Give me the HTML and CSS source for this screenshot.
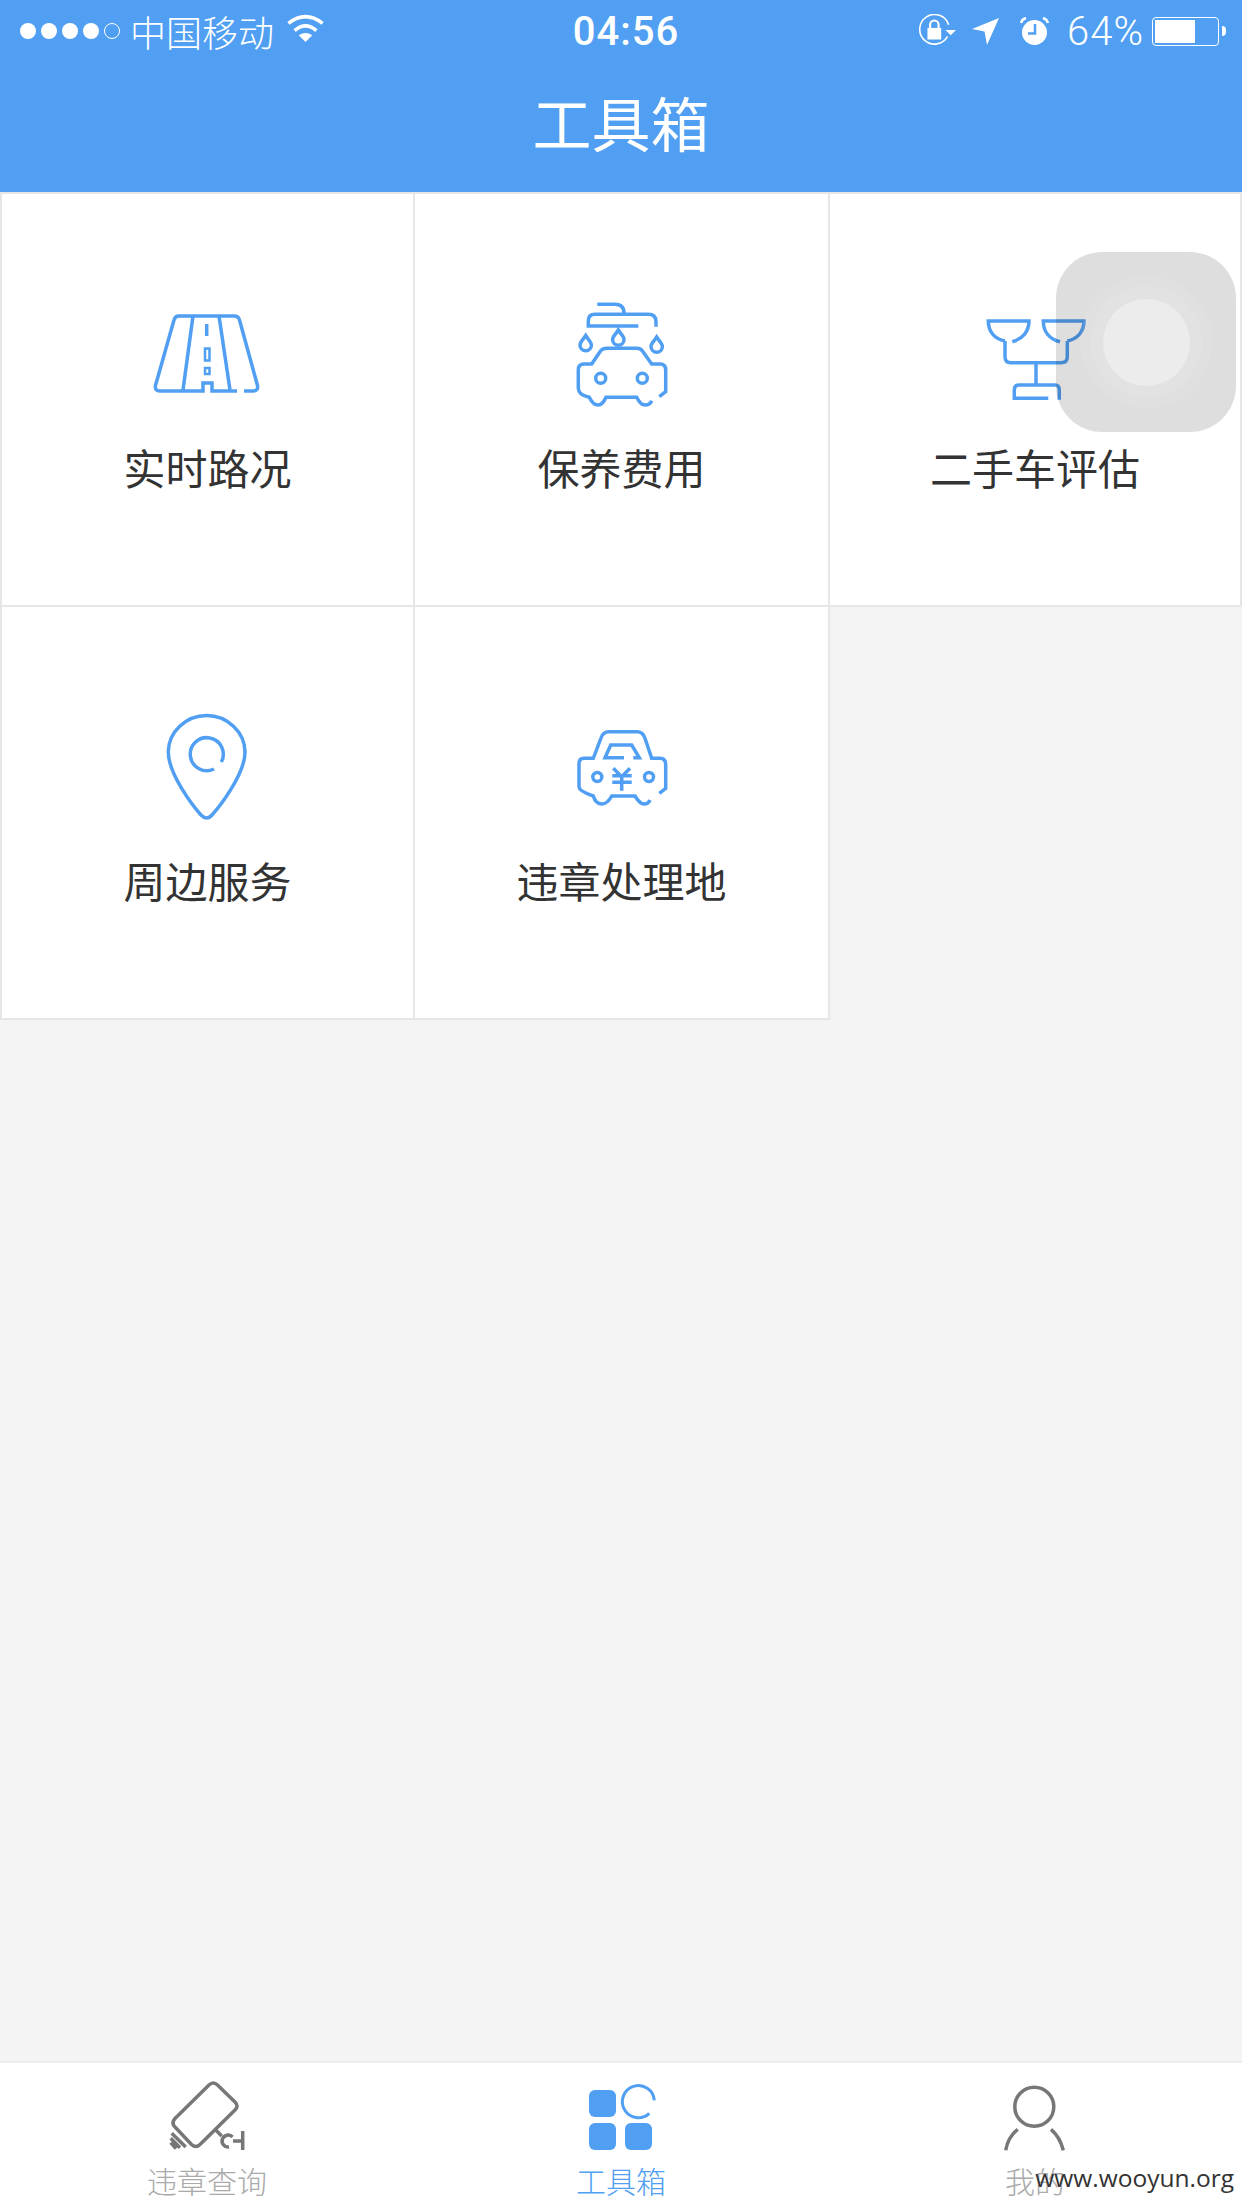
FILE: index.html
```html
<html>

<head>
  <link rel="stylesheet" href="styles.css">
</head>

<body>
  <div class="page">
    <div class="header">
      <div class="status">
        <div class="status-left">
          <div class="dots">
            <div class="dot"></div>
            <div class="dot"></div>
            <div class="dot"></div>
            <div class="dot"></div>
            <div class="dot dot-empty"></div>
          </div>
          <div class="carrier">中国移动</div>
          <svg class="wifi" width="39" height="29" viewBox="0 0 37 28">
            <path d="M2 10Q18.5-3 35 10M8 17Q18.5 8 29 17" fill="none" stroke="#fff" stroke-width="3.5" />
            <path d="M12 21.5Q18.5 17 25 21.5L18.5 28Z" fill="#fff" />
          </svg>
        </div>
        <div class="time">04:56</div>
        <div class="status-right">
          <svg class="lock" width="37" height="32" viewBox="0 0 35 30">
            <path d="M27 21A14 14 0 1 1 28 10" fill="none" stroke="#fff" stroke-width="1.5" />
            <rect x="8" y="13" width="13" height="11" fill="#fff" />
            <path d="M10.5 13V10A4 4 0 0 1 18.5 10V13" fill="none" stroke="#fff" stroke-width="2" />
            <path d="M25 15H35L30 20Z" fill="#fff" />
          </svg>
          <svg class="gap-arrow" width="27" height="27" viewBox="0 0 27 27">
            <path d="M0 11L27 0L15 27L12.500 13.500Z" fill="#fff" />
          </svg>
          <svg class="gap-alarm" width="29" height="28" viewBox="0 0 29 28">
            <circle cx="14.500" cy="15.500" r="12.500" fill="#fff" />
            <path d="M15 7V16.500H8" fill="none" stroke="#519ff2" stroke-width="2.500" />
            <path d="M1 6Q2 2 6 1M28 6Q27 2 23 1" fill="none" stroke="#fff" stroke-width="2.500" />
          </svg>
          <div class="percent">64%</div>
          <div class="battery">
            <div class="battery-fill"></div>
          </div>
          <div class="battery-nub"></div>
        </div>
      </div>
      <div class="title">工具箱</div>
    </div>

    <div class="main">
      <div class="grid">
        <div class="cell">
          <svg class="icon" width="120" height="120" viewBox="0 0 120 120">
            <path d="M96 91H105Q110.500 91 109.500 85.500L91.500 20Q90.500 16 86 16H31Q27 16 26 20L7.500 85.500Q6.500 91 12 91H55V83H64V91H89" />
            <path d="M45 16L35 90M71 16L82 90M58.700 24V36" />
            <rect x="57" y="48.500" width="4.500" height="12" stroke-width="2.500" />
            <rect x="57" y="68" width="4.500" height="6" stroke-width="2.500" />
          </svg>
          <div class="label">实时路况</div>
        </div>

        <div class="cell">
          <svg class="icon" width="120" height="120" viewBox="0 0 120 120">
            <path d="M35.300 4.300H53Q62 4.300 62 13.300" />
            <path d="M76.300 26H26.300V21Q26.300 14.300 33 14.300H86.300Q94 14.300 94 21.700V26.700" />
            <path d="M23.700 35.500C21 40 18 42 18 45A5.700 5.700 0 0 0 29.400 45C29.400 42 26.500 40 23.700 35.500Z" />
            <path d="M56.300 30C53.600 34.500 50.600 36.500 50.600 39.500A5.700 5.700 0 0 0 62 39.500C62 36.500 59 34.500 56.300 30Z" />
            <path d="M94.700 37C92 41.500 89 43.500 89 46.500A5.700 5.700 0 0 0 100.400 46.500C100.400 43.500 97.500 41.500 94.700 37Z" />
            <path d="M97.300 96.700L103.700 91.700V70Q103.700 64 98 64H89.700L81 51.700Q79 48.300 75 48.300H45Q40 48.300 38 51.700L29.700 64H22Q16.300 64 16.300 70V88Q16.300 95 27.300 97.300C30 103 33 105 36 105C40 105 42 102 44 97.300H74.700C77 102 80 105 83 105C86 105 88.500 103.500 89.700 100.700" />
            <circle cx="38.700" cy="78.300" r="5" />
            <circle cx="80.300" cy="78.300" r="5" />
          </svg>
          <div class="label">保养费用</div>
        </div>

        <div class="cell">
          <svg class="icon" width="120" height="120" viewBox="-1 -1 120 120">
            <path d="M29 40C18 38 12.300 30 12.300 20H53C53 30 47 38 36.300 40.700" />
            <path d="M84 40.700C73 38 67.300 30 67.300 20H108C108 30 102 38 91.300 40" />
            <path d="M29 40V56Q29 61.700 35 61.700H85Q91.300 61.700 91.300 56V40M60 61.700V84" />
            <path d="M72.300 97.300H38.300V89Q38.300 84 43 84H79Q83.300 84 83.300 89V98.700" />
          </svg>
          <div class="label">二手车评估</div>
        </div>

        <div class="cell">
          <svg class="icon" width="120" height="120" viewBox="0 -1 120 120">
            <path d="M58.700 1.500C38 1.500 20.300 18 20.300 38C20.300 60 45 92 53 101Q58.700 107 64 101C72 92 97 60 97 38C97 18 79 1.500 58.700 1.500Z" />
            <path d="M66 55A16.500 16.500 0 1 1 73.300 48" />
          </svg>
          <div class="label">周边服务</div>
        </div>

        <div class="cell">
          <svg class="icon" width="120" height="120" viewBox="0 -1 120 120">
            <path d="M97.300 79.300L103.700 74.300V51Q103.700 44.300 98 44.300H89.700L83 24.300Q81 17.700 75 17.700H47Q41 17.700 39 24L31.300 44.300H22Q17 44.300 17 50V72.700Q17 77 31.300 82C33 88 37 90 40 90C44 90 47 87 49.700 82H73C76 87 79 90 82 90C85 90 87 88.500 88 86" />
            <path d="M62 43.700H43L48.700 31H69.700L77.300 43.700H71.300" />
            <circle cx="35.300" cy="63" r="4.500" />
            <circle cx="87" cy="63" r="4.500" />
            <path d="M51.300 54.300L59.700 62.700L68 54.300M50.300 61.700H69.700M50.300 68.300H69.700M59.700 61.700V76.700" />
          </svg>
          <div class="label">违章处理地</div>
        </div>
      </div>
    </div>

    <div class="tabbar">
      <div class="tab">
        <svg width="100" height="80" viewBox="0 0 100 80">
          <g class="tab-line">
            <path d="M52 8Q56.300 4 60.500 8L78 25Q82 29 78 33L43 67.500Q39 71.500 34.500 67.500L18 50Q14 46 18 41.500Z" />
            <path d="M14.700 56.300L28.700 70M13.700 61.300L23 70.700M13.700 65.700L19 71.700" />
            <path d="M59 53.300L64.700 59M75.500 60A6 6 0 1 0 72 70M76 64H85.700M85.700 54V73" />
          </g>
        </svg>
        <div class="tab-label">违章查询</div>
      </div>
      <div class="tab tab-active">
        <svg width="100" height="80" viewBox="0 0 100 80">
          <rect x="18" y="13" width="27" height="27" rx="6" fill="#519ff2" />
          <rect x="18" y="46" width="27" height="27" rx="6" fill="#519ff2" />
          <rect x="54" y="46" width="27" height="27" rx="6" fill="#519ff2" />
          <path d="M83.300 23.300A16 16 0 1 0 78.300 36.300" fill="none" stroke="#519ff2" stroke-width="3" />
        </svg>
        <div class="tab-label">工具箱</div>
      </div>
      <div class="tab">
        <svg width="100" height="80" viewBox="0 0 100 80">
          <g class="tab-line">
            <circle cx="49.300" cy="29.700" r="19.500" />
            <path d="M32.700 52.300Q23 60 20.700 73.300M66 52.300Q75 60 78.300 73.300" />
          </g>
        </svg>
        <div class="tab-label">我的</div>
      </div>
    </div>
  </div>

  <div class="assist">
    <div class="assist-outer">
      <div class="assist-middle">
        <div class="assist-inner"></div>
      </div>
    </div>
  </div>

  <div class="watermark">www.wooyun.org</div>
</body>

</html>
```

FILE: styles.css
```css
body {
  margin: 0;
  font-family: "Noto Sans CJK SC", "Noto Sans", sans-serif;
  background: #f4f4f4;
}

.page {
  display: flex;
  flex-direction: column;
  height: 2208px;
}

.header {
  background: #519ff2;
  color: #fff;
  border-bottom: 2px solid #e6e6e6;
}

.status {
  display: flex;
  justify-content: space-between;
  align-items: center;
  height: 62px;
  padding: 0 16px 0 20px;
}

.status-left {
  display: flex;
  align-items: center;
}

.dots {
  display: flex;
  gap: 5px;
}

.dot {
  width: 16px;
  height: 16px;
  border-radius: 50%;
  background: #fff;
  box-sizing: border-box;
}

.dot-empty {
  background: none;
  border: 1px solid #fff;
}

.carrier {
  margin-left: 10px;
  font-size: 36px;
  line-height: 60px;
  font-weight: 300;
}

.wifi {
  margin-left: 12px;
  margin-top: -7px;
}

.time {
  margin-left: 8px;
  font-family: Roboto, sans-serif;
  font-size: 40px;
  font-weight: 500;
  letter-spacing: 1px;
}

.status-right {
  display: flex;
  align-items: center;
}

.lock {
  margin-top: -3px;
}

.gap-arrow {
  margin-left: 16px;
}

.gap-alarm {
  margin-left: 21px;
}

.percent {
  margin-left: 18px;
  font-family: Roboto, sans-serif;
  font-size: 40px;
  font-weight: 300;
  letter-spacing: 1px;
}

.battery {
  box-sizing: border-box;
  width: 67px;
  height: 29px;
  margin-left: 8px;
  padding: 2px;
  border: 1px solid #fff;
  border-radius: 4px;
}

.battery-fill {
  width: 40px;
  height: 100%;
  background: #fff;
}

.battery-nub {
  width: 4px;
  height: 10px;
  margin-left: 3px;
  background: #fff;
  border-radius: 0 5px 5px 0;
}

.title {
  height: 130px;
  font-size: 59px;
  line-height: 120px;
  text-align: center;
  font-weight: 400;
}

.main {
  flex: 1;
}

.grid {
  display: grid;
  grid-template-columns: 415px 415px 412px;
  grid-auto-rows: 413px;
}

.cell {
  display: flex;
  flex-direction: column;
  align-items: center;
  box-sizing: border-box;
  padding-top: 106px;
  background: #fff;
  border-right: 2px solid #e6e6e6;
  border-bottom: 2px solid #e6e6e6;
}

.cell:nth-child(3n+1) {
  border-left: 2px solid #e6e6e6;
}

.icon {
  fill: none;
  stroke: #519ff2;
  stroke-width: 3.5;
}

.label {
  margin-top: 17px;
  font-size: 42px;
  line-height: 60px;
  font-weight: 400;
  color: #333;
}

.tabbar {
  display: flex;
  justify-content: space-between;
  height: 145px;
  background: #fff;
  border-top: 2px solid #eee;
}

.tab {
  display: flex;
  flex-direction: column;
  align-items: center;
  width: 414px;
  padding-top: 14px;
  color: #aaa;
}

.tab-active {
  color: #519ff2;
}

.tab-line {
  fill: none;
  stroke: #777;
  stroke-width: 3.5;
}

.tab-label {
  margin-top: 3px;
  font-size: 30px;
  line-height: 40px;
  font-weight: 300;
}

.assist {
  position: absolute;
  left: 1056px;
  top: 252px;
  display: flex;
  justify-content: center;
  align-items: center;
  width: 180px;
  height: 180px;
  border-radius: 46px;
  background: rgba(0, 0, 0, 0.13);
}

.assist-outer,
.assist-middle,
.assist-inner {
  display: flex;
  justify-content: center;
  align-items: center;
  border-radius: 50%;
  background: rgba(255, 255, 255, 0.08);
}

.assist-outer {
  width: 132px;
  height: 132px;
}

.assist-middle {
  width: 112px;
  height: 112px;
}

.assist-inner {
  width: 87px;
  height: 87px;
  background: rgba(255, 255, 255, 0.36);
}

.watermark {
  position: absolute;
  right: 8px;
  top: 2161px;
  font-family: "Open Sans", sans-serif;
  font-size: 24.5px;
  color: #333;
}
```
